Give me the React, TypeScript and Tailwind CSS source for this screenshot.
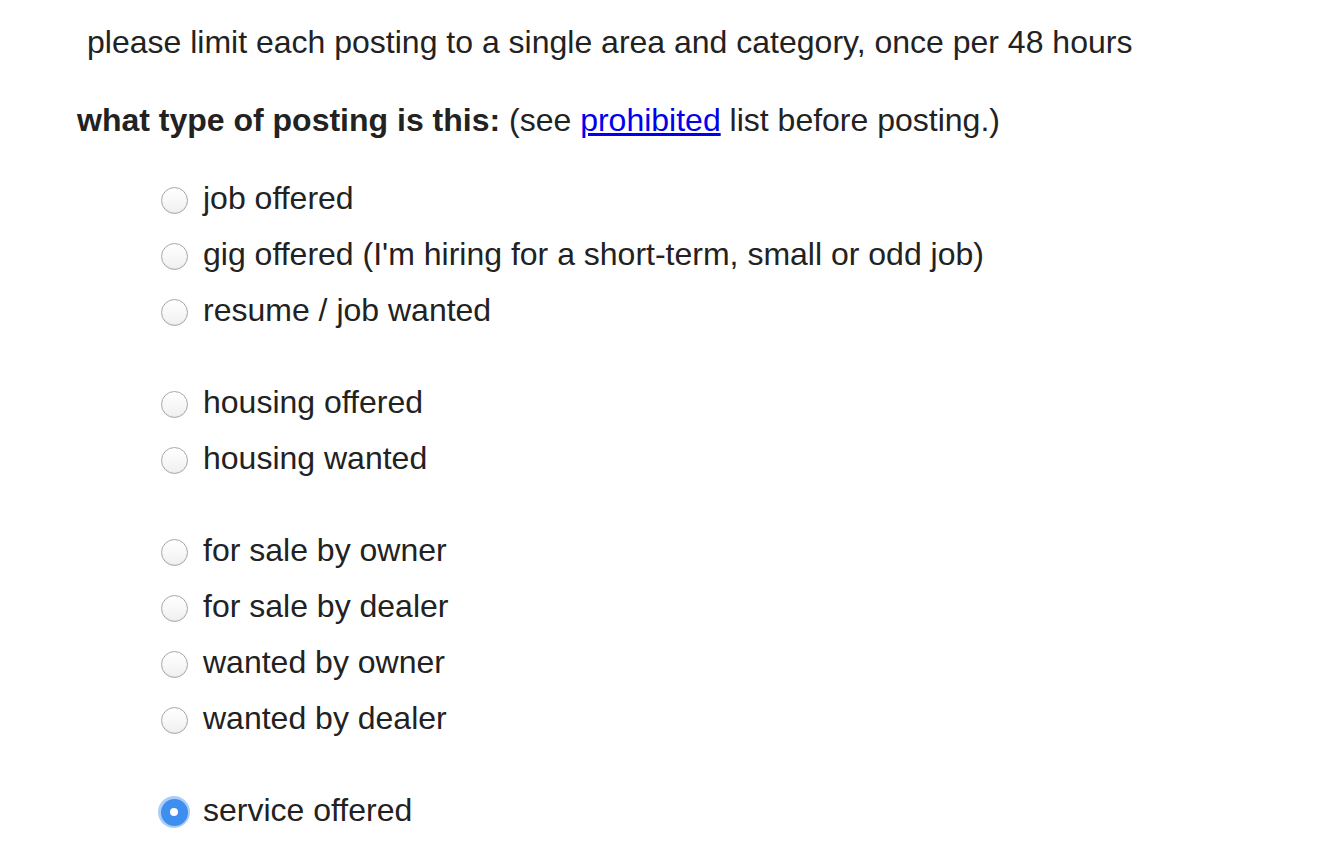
const GROUPS: string[][] = [
  ["job offered", "gig offered (I'm hiring for a short-term, small or odd job)", "resume / job wanted"],
  ["housing offered", "housing wanted"],
  ["for sale by owner", "for sale by dealer", "wanted by owner", "wanted by dealer"],
  ["service offered"],
];

function Radio({ checked }: { checked?: boolean }) {
  if (checked) {
    return (
      <span className="flex h-[32px] w-[32px] items-center justify-center rounded-full bg-[#a9cdf7]">
        <span className="flex h-[27px] w-[27px] items-center justify-center rounded-full bg-[#3d8eef]">
          <span className="h-[8px] w-[8px] rounded-full bg-white" />
        </span>
      </span>
    );
  }
  return (
    <span className="flex h-[32px] w-[32px] items-center justify-center">
      <span className="h-[27px] w-[27px] rounded-full border border-[#a8a8a8] bg-gradient-to-b from-white to-[#f0f0f0] shadow-[inset_0_-1px_1px_rgba(0,0,0,0.05)]" />
    </span>
  );
}

export default function App() {
  return (
    <main className="min-h-[864px] bg-white pt-[22px] pl-[77px] font-['Liberation_Sans',Arial,sans-serif] text-[32px] text-[#222]">
      <p className="pl-[10px] leading-[40px]">
        please limit each posting to a single area and category, once per 48 hours
      </p>
      <p className="mt-[38px] leading-[40px]">
        <b className="font-bold">what type of posting is this:</b> (see{" "}
        <a href="#" className="text-[#0000ee] underline">prohibited</a> list before posting.)
      </p>
      <div className="mt-[32px] flex flex-col gap-[36px] pl-[81px]">
        {GROUPS.map((g, gi) => (
          <div key={gi} className="flex flex-col">
            {g.map((label) => (
              <label key={label} className="flex h-[56px] items-center gap-[13px]">
                <Radio checked={label === "service offered"} />
                <span className="-mt-[5px] leading-[40px]">{label}</span>
              </label>
            ))}
          </div>
        ))}
      </div>
    </main>
  );
}
